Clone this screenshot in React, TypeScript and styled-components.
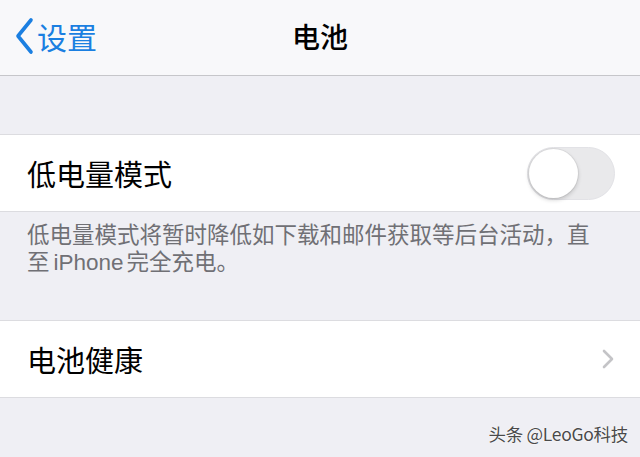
import React from 'react';
import styled, { createGlobalStyle } from 'styled-components';

const GlobalStyle = createGlobalStyle`
  html, body {
    margin: 0;
    padding: 0;
    background: #efeff4;
  }
  body {
    font-family: "Noto Sans CJK SC", "Noto Sans", sans-serif;
    -webkit-font-smoothing: antialiased;
  }
`;

const Screen = styled.div`
  width: 640px;
  height: 457px;
  background: #efeff4;
  display: flex;
  flex-direction: column;
  overflow: hidden;
`;

const NavBar = styled.header`
  height: 75px;
  flex-shrink: 0;
  background: #f8f8fa;
  border-bottom: 1px solid #c6c6ca;
  display: grid;
  grid-template-columns: 1fr auto 1fr;
  align-items: center;
`;

const BackButton = styled.div`
  display: flex;
  align-items: center;
  gap: 2px;
  padding-left: 13px;
  color: #1b7fe1;
  font-size: 30px;
  line-height: 1;
  margin-top: -3px;
`;

const Title = styled.h1`
  margin: 0;
  font-size: 28px;
  font-weight: 500;
  color: #000;
  margin-top: -3px;
`;

const Spacer = styled.div<{ h: number }>`
  height: ${(p) => p.h}px;
  flex-shrink: 0;
`;

const Cell = styled.div`
  height: 76px;
  flex-shrink: 0;
  background: #fff;
  border-top: 1px solid #dcdce0;
  border-bottom: 1px solid #dcdce0;
  display: flex;
  align-items: center;
  justify-content: space-between;
  padding: 0 26px 0 27px;
`;

const CellLabel = styled.span`
  font-size: 29px;
  color: #000;
  line-height: 1;
`;

const Footer = styled.div`
  height: 108px;
  flex-shrink: 0;
  box-sizing: border-box;
  padding: 10px 20px 0 27px;
  display: flex;
  flex-direction: column;
`;

const FooterLine = styled.div`
  font-family: "Liberation Sans", "Noto Sans CJK SC", sans-serif;
  font-size: 22.5px;
  line-height: 27px;
  color: #707075;
  white-space: nowrap;
`;

const Latin = styled.span`
  margin: 0 3px 0 4px;
`;

const Toggle = styled.div`
  width: 88px;
  height: 53px;
  box-sizing: border-box;
  border-radius: 27px;
  background: #e9e9eb;
  border: 1px solid #e2e2e6;
  display: flex;
  align-items: center;
  padding: 1px;
  margin-right: -1px;
`;

const Knob = styled.div`
  width: 49px;
  height: 49px;
  border-radius: 50%;
  background: #fff;
  box-shadow: 0 2px 4px rgba(0, 0, 0, 0.18), 0 0 0 1px rgba(0, 0, 0, 0.05);
`;

const Bottom = styled.div`
  flex: 1;
  display: flex;
  align-items: flex-end;
  justify-content: flex-end;
  padding: 0 12px 11px 0;
`;

const Watermark = styled.span`
  font-family: "Noto Sans CJK SC", sans-serif;
  font-size: 17.5px;
  color: #4a4a4a;
  text-shadow: 0 0 2px #fff, 0 0 1px #fff;
  letter-spacing: -0.3px;
`;

const BackChevron = () => (
  <svg width="22" height="38" viewBox="0 0 22 38">
    <path d="M18 3 L5 19 L18 35" fill="none" stroke="#1b7fe1" strokeWidth="3.6" strokeLinecap="round" strokeLinejoin="round" />
  </svg>
);

const Disclosure = () => (
  <svg width="12" height="20" viewBox="0 0 12 20">
    <path d="M2 2 L10 10 L2 18" fill="none" stroke="#c4c4c7" strokeWidth="2.6" strokeLinecap="round" strokeLinejoin="round" />
  </svg>
);

export default function App() {
  return (
    <>
      <GlobalStyle />
      <Screen>
        <NavBar>
          <BackButton>
            <BackChevron />
            <span>设置</span>
          </BackButton>
          <Title>电池</Title>
          <div />
        </NavBar>
        <Spacer h={58} />
        <Cell>
          <CellLabel>低电量模式</CellLabel>
          <Toggle>
            <Knob />
          </Toggle>
        </Cell>
        <Footer>
          <FooterLine>低电量模式将暂时降低如下载和邮件获取等后台活动，直</FooterLine>
          <FooterLine>
            至<Latin>iPhone</Latin>完全充电。
          </FooterLine>
        </Footer>
        <Cell>
          <CellLabel>电池健康</CellLabel>
          <Disclosure />
        </Cell>
        <Bottom>
          <Watermark>头条 @LeoGo科技</Watermark>
        </Bottom>
      </Screen>
    </>
  );
}
